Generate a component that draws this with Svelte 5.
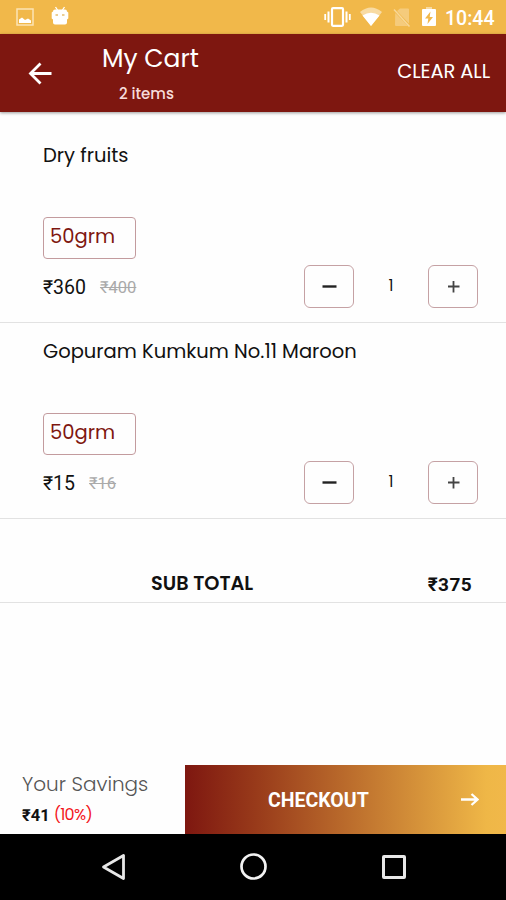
<script>
    let items = $state([
        { id: 1, name: 'Dry fruits', unit: '50grm', price: 360, mrp: 400, qty: 1 },
        { id: 2, name: 'Gopuram Kumkum No.11 Maroon', unit: '50grm', price: 15, mrp: 16, qty: 1 }
    ]);

    let total = $derived(items.reduce((sum, i) => sum + i.price * i.qty, 0));
    let mrpTotal = $derived(items.reduce((sum, i) => sum + i.mrp * i.qty, 0));
    let savings = $derived(mrpTotal - total);
    let percent = $derived(mrpTotal ? Math.round(savings * 100 / mrpTotal) : 0);

    function decrease(item) {
        if (item.qty > 1) item.qty -= 1;
        else items = items.filter(i => i.id !== item.id);
    }
</script>

<div class="screen">
    <div class="status">
        <svg class="picture" width="18" height="18" viewBox="0 0 18 18">
            <rect x="1" y="1" width="16" height="16" fill="none" stroke="#fbe3b5" stroke-width="1.5" />
            <path d="M3 15v-3.500l3-2 3 2.500 3-1.500 3 2V15z" fill="#fff" />
        </svg>
        <svg class="robot" width="18" height="20" viewBox="0 0 18 20">
            <path d="M4.500 1l2 3M13.500 1l-2 3" stroke="#fff" stroke-width="1.3" />
            <path d="M4 3.500h10q2 0 2 2l1.300 1v6l-1.300 1v3q0 2-2 2H4q-2 0-2-2v-3l-1.300-1v-6l1.300-1q0-2 2-2z" fill="#fff" />
            <path d="M4.500 9h2.500M11 9h2.500" stroke="#e5bd70" stroke-width="1.500" />
        </svg>
        <div class="signals">
            <svg class="vibrate" width="27" height="20" viewBox="0 0 27 20">
                <rect x="8" y="1.200" width="11" height="17.600" rx="1" fill="none" stroke="#fff" stroke-width="2.200" />
                <path d="M4.500 4.500v11M22.500 4.500v11" stroke="#fff" stroke-width="2" />
                <path d="M1.200 7v6M25.800 7v6" stroke="#fff" stroke-width="1.800" />
            </svg>
            <svg class="wifi" width="24" height="20" viewBox="0 0 24 20">
                <path d="M1 5Q12-4 23 5L12 19z" fill="#f8dba3" />
                <path d="M3.500 8.500Q12 3 20.500 8.500L12 19z" fill="#fff" />
            </svg>
            <svg class="sim" width="18" height="20" viewBox="0 0 18 20">
                <path d="M7 1.500h8q1 0 1 1v14L4 4zM2.200 6L15 19H3q-1 0-1-1z" fill="#f5cb7c" />
                <path d="M1 2.500l15.500 17" stroke="#f8d797" stroke-width="1.500" />
            </svg>
            <svg class="battery" width="14" height="20" viewBox="0 0 14 20">
                <path d="M4 0h6v3H4z" fill="#f8dba3" />
                <path d="M1 2h12q1 0 1 1v15q0 1-1 1H1q-1 0-1-1V3q0-1 1-1z" fill="#fff" />
                <path d="M8.500 4.500L3 11.500h3.300L5.500 17l5.500-7H7.700z" fill="#f1b84a" />
            </svg>
            <span class="clock">10:44</span>
        </div>
    </div>

    <header>
        <button class="back" aria-label="Back">
            <svg width="24" height="24" viewBox="0 0 24 24">
                <path d="M23.500 12.500H2.500M12.500 2.500L2.500 12.500l10 10" fill="none" stroke="#fff" stroke-width="2.800" />
            </svg>
        </button>
        <div class="heading">
            <h1>My Cart</h1>
            <p>2 items</p>
        </div>
        <button class="clear" onclick={() => items = []}>CLEAR ALL</button>
    </header>

    <main>
        {#each items as item (item.id)}
            <section class="item">
                <h2>{item.name}</h2>
                <div class="unit">{item.unit}</div>
                <div class="row">
                    <span class="price">₹{item.price}</span>
                    <s>₹{item.mrp}</s>
                    <div class="stepper">
                        <button aria-label="Decrease" onclick={() => decrease(item)}>
                            <svg width="16" height="14" viewBox="0 0 16 14">
                                <path d="M1.500 7.500h14" stroke="#222" stroke-width="2.400" />
                            </svg>
                        </button>
                        <span class="qty">{item.qty}</span>
                        <button aria-label="Increase" onclick={() => item.qty += 1}>
                            <svg width="14" height="14" viewBox="0 0 14 14">
                                <path d="M2 7.500h11.500M7.500 2v11.500" stroke="#444" stroke-width="1.800" />
                            </svg>
                        </button>
                    </div>
                </div>
            </section>
        {/each}
        <div class="total">
            <span class="label">SUB TOTAL</span>
            <span class="amount">₹{total}</span>
        </div>
    </main>

    <footer>
        <div class="savings">
            <div class="caption">Your Savings</div>
            <div class="saved"><b>₹{savings}</b><span>({percent}%)</span></div>
        </div>
        <button class="checkout">
            <span>CHECKOUT</span>
            <svg width="18" height="14" viewBox="0 0 18 14">
                <path d="M0 6.500h16.500M10.500 1l6 5.500-6 5.500" fill="none" stroke="#fff" stroke-width="2.300" />
            </svg>
        </button>
    </footer>

    <nav>
        <svg width="26" height="28" viewBox="0 0 26 28">
            <path d="M22.500 2.500v23L2.500 14z" fill="none" stroke="#e8e8e8" stroke-width="2.800" stroke-linejoin="round" />
        </svg>
        <svg width="28" height="28" viewBox="0 0 28 28">
            <circle cx="13.500" cy="13.500" r="12" fill="none" stroke="#f2f2f2" stroke-width="2.700" />
        </svg>
        <svg width="26" height="28" viewBox="0 0 26 28">
            <rect x="2.500" y="3.500" width="21" height="21" rx="0.500" fill="none" stroke="#e8e8e8" stroke-width="3" />
        </svg>
    </nav>
</div>

<style>
    :global(body) {
        margin: 0;
        background: #fff;
    }

    .screen {
        display: flex;
        flex-direction: column;
        width: 506px;
        height: 900px;
        overflow: hidden;
        background: #fefefe;
        color: #111;
        font-family: Poppins, Inter, "Noto Sans", sans-serif;
    }

    svg {
        display: block;
        flex: none;
    }

    h1, h2, p {
        margin: 0;
        font-weight: 400;
    }

    button {
        padding: 0;
        border: none;
        background: none;
        color: inherit;
        font: inherit;
        cursor: pointer;
    }

    .status {
        display: flex;
        align-items: center;
        height: 34px;
        box-sizing: border-box;
        padding: 0 10px 0 16px;
        background: #f1b84a;
    }

    .robot {
        margin: -2px 0 0 17px;
    }

    .signals {
        display: flex;
        align-items: center;
        margin-left: auto;
        color: #fff;
    }

    .wifi {
        margin-left: 8px;
    }

    .sim {
        margin-left: 10px;
    }

    .battery {
        margin-left: 11px;
    }

    .clock {
        width: 51px;
        margin-left: 9px;
        padding-top: 3px;
        font: 500 19.5px/34px Roboto, sans-serif;
        white-space: nowrap;
    }

    header {
        position: relative;
        display: flex;
        height: 78px;
        background: #7e1710;
        color: #fff;
        box-shadow: 0 1px 3px rgba(0, 0, 0, 0.4);
    }

    .back {
        align-self: center;
        margin-left: 28px;
    }

    .heading {
        width: 98px;
        margin-left: 50px;
        white-space: nowrap;
    }

    h1 {
        margin-top: 9px;
        font-size: 25px;
        line-height: 32px;
    }

    .heading p {
        margin-top: 9px;
        padding-left: 17px;
        font-size: 15px;
        font-weight: 500;
        line-height: 20px;
        color: #f6dcda;
    }

    .clear {
        height: 74px;
        margin: 0 16px 0 auto;
        font-size: 19.5px;
        letter-spacing: -0.1px;
    }

    main {
        flex: 1;
        padding-top: 15px;
    }

    .item {
        height: 196px;
        box-sizing: border-box;
        padding: 15px 28px 0 43px;
        border-bottom: 1px solid #e2e2e2;
    }

    h2 {
        font-size: 19.5px;
        line-height: 28px;
        white-space: nowrap;
    }

    .unit {
        width: 93px;
        height: 42px;
        box-sizing: border-box;
        margin-top: 47px;
        padding-left: 6px;
        border: 1px solid #c39b9e;
        border-radius: 4px;
        color: #7e1710;
        font-size: 19.5px;
        line-height: 37px;
    }

    .row {
        display: flex;
        align-items: center;
        height: 44px;
        margin-top: 5px;
    }

    .price {
        padding-top: 4px;
        font: 400 19.5px/24px Roboto, sans-serif;
    }

    s {
        margin-left: 14px;
        padding-top: 3px;
        color: #aaa;
        font: 400 16.5px/20px Roboto, sans-serif;
    }

    .stepper {
        display: flex;
        align-items: center;
        justify-content: space-between;
        width: 174px;
        margin-left: auto;
    }

    .stepper button {
        display: flex;
        align-items: center;
        justify-content: center;
        width: 50px;
        height: 43px;
        box-sizing: border-box;
        border: 1px solid #c5a1a4;
        border-radius: 6px;
    }

    .qty {
        font-size: 15.5px;
        line-height: 20px;
        margin-top: -1px;
    }

    .total {
        display: flex;
        justify-content: space-between;
        height: 84px;
        box-sizing: border-box;
        padding: 52px 34px 0 151px;
        border-bottom: 1px solid #e2e2e2;
        font-size: 19.3px;
        font-weight: 600;
        line-height: 26px;
    }

    .amount {
        padding-top: 1px;
        font: 700 19px/26px Roboto, sans-serif;
        letter-spacing: 0.4px;
    }

    footer {
        display: flex;
        height: 69px;
    }

    .savings {
        width: 185px;
        box-sizing: border-box;
        padding: 6px 0 0 22px;
        white-space: nowrap;
    }

    .caption {
        color: #555;
        font-size: 20px;
        font-weight: 300;
        line-height: 26px;
    }

    .saved {
        display: flex;
        margin-top: 8px;
        line-height: 20px;
    }

    .saved b {
        padding-top: 1px;
        font: 700 16.5px/20px Roboto, sans-serif;
    }

    .saved span {
        margin-left: 4px;
        color: #f3161c;
        font-size: 16px;
        letter-spacing: -0.7px;
    }

    .checkout {
        display: flex;
        flex: 1;
        align-items: center;
        justify-content: space-between;
        padding: 1px 27px 0 83px;
        background: linear-gradient(90deg, #7e1710 0%, #983a1a 22%, #efb747 94%, #f1b84a 100%);
        color: #fff;
        font: 700 19.5px Roboto, sans-serif;
    }

    nav {
        display: flex;
        justify-content: space-between;
        height: 66px;
        box-sizing: border-box;
        padding: 19px 99px 0 101px;
        background: #000;
    }
</style>
